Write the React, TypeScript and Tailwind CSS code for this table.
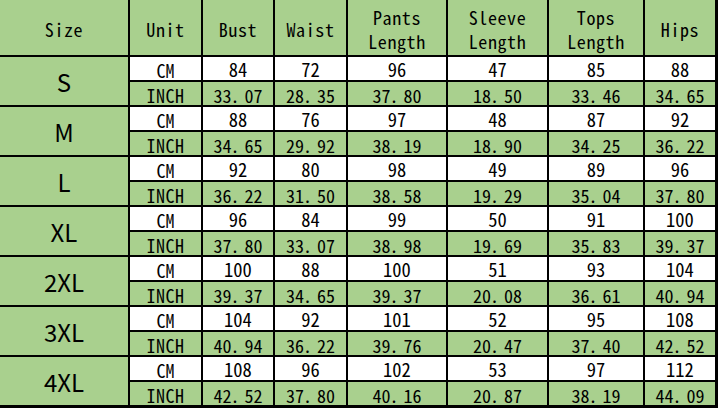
import React from "react";

const sizes = [
  { s: "S", cm: ["84", "72", "96", "47", "85", "88"], inch: ["33.07", "28.35", "37.80", "18.50", "33.46", "34.65"] },
  { s: "M", cm: ["88", "76", "97", "48", "87", "92"], inch: ["34.65", "29.92", "38.19", "18.90", "34.25", "36.22"] },
  { s: "L", cm: ["92", "80", "98", "49", "89", "96"], inch: ["36.22", "31.50", "38.58", "19.29", "35.04", "37.80"] },
  { s: "XL", cm: ["96", "84", "99", "50", "91", "100"], inch: ["37.80", "33.07", "38.98", "19.69", "35.83", "39.37"] },
  { s: "2XL", cm: ["100", "88", "100", "51", "93", "104"], inch: ["39.37", "34.65", "39.37", "20.08", "36.61", "40.94"] },
  { s: "3XL", cm: ["104", "92", "101", "52", "95", "108"], inch: ["40.94", "36.22", "39.76", "20.47", "37.40", "42.52"] },
  { s: "4XL", cm: ["108", "96", "102", "53", "97", "112"], inch: ["42.52", "37.80", "40.16", "20.87", "38.19", "44.09"] },
];

const headers: string[][] = [
  ["Size"],
  ["Unit"],
  ["Bust"],
  ["Waist"],
  ["Pants", "Length"],
  ["Sleeve", "Length"],
  ["Tops", "Length"],
  ["Hips"],
];

const hw = "[font-feature-settings:'hwid']";

function Num({ v }: { v: string }) {
  const i = v.indexOf(".");
  if (i < 0) return <>{v}</>;
  return (
    <>
      {v.slice(0, i)}
      <span className="ml-[-1px] mr-[5px]">.</span>
      {v.slice(i + 1)}
    </>
  );
}

export default function App() {
  return (
    <div
      className="w-[718px] h-[408px] bg-black pr-[3px] pb-[3px] overflow-hidden"
      style={{ fontFamily: '"Noto Sans CJK SC", "Noto Sans", sans-serif' }}
    >
      <div className="grid grid-cols-[128px_71px_70px_71px_98px_99px_94px_70px] grid-rows-[55px_repeat(14,23px)] gap-[2px] text-black">
        {headers.map((h, i) => (
          <div
            key={i}
            className={`bg-[#a9d08e] flex flex-col items-center justify-center text-[18px] leading-[24px] tracking-[0.6px] pt-[2px] ${hw}`}
          >
            {h.map((l, j) => (
              <span key={j}>{l}</span>
            ))}
          </div>
        ))}
        {sizes.map((r) => (
          <React.Fragment key={r.s}>
            <div className="row-span-2 bg-[#a9d08e] flex items-center justify-center text-[24px] pt-[2px]">
              {r.s}
            </div>
            <div className={`bg-white flex items-center justify-center text-[18px] pt-[3px] ${hw}`}>CM</div>
            {r.cm.map((v, i) => (
              <div key={i} className={`bg-white flex items-center justify-center text-[18.5px] pt-[3px] ${hw}`}>
                <Num v={v} />
              </div>
            ))}
            <div className={`bg-[#a9d08e] flex items-center justify-center text-[18px] tracking-[0.5px] pt-[3px] ${hw}`}>INCH</div>
            {r.inch.map((v, i) => (
              <div key={i} className={`bg-[#a9d08e] flex items-center justify-center text-[18px] pt-[3px] ${hw}`}>
                <Num v={v} />
              </div>
            ))}
          </React.Fragment>
        ))}
      </div>
    </div>
  );
}
